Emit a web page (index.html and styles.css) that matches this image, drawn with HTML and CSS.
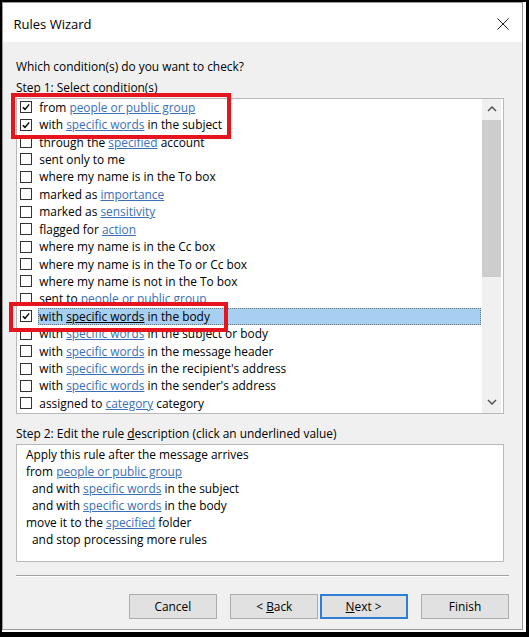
FILE: index.html
```html
<!DOCTYPE html>
<html lang="en">
  <head>
    <meta charset="UTF-8" />
    <meta name="viewport" content="width=device-width, initial-scale=1.0" />
    <title>Rules Wizard</title>
    <link rel="stylesheet" href="styles.css">
  </head>
  <body>
    <div class="frame">
      <div class="dialog">
        <div class="titlebar">
          <span class="title">Rules Wizard</span>
          <svg class="close" width="12" height="12" viewBox="0 0 12 12">
            <path d="M0.5 0.5 L11.5 11.5 M11.5 0.5 L0.5 11.5" stroke="#222" stroke-width="1" fill="none" />
          </svg>
        </div>

        <div class="content">
          <p class="prompt">Which condition(s) do you want to check?</p>
          <p class="step">Step 1: Select <u>c</u>ondition(s)</p>

          <div class="listbox">
            <ul class="conditions">
              <li class="row">
                <span class="check"><svg viewBox="0 0 12 12"><path d="M2.2 6.2 L4.8 8.8 L9.8 2.8" /></svg></span>
                <span class="label">from <a class="link" href="#">people or public group</a></span>
              </li>
              <li class="row">
                <span class="check"><svg viewBox="0 0 12 12"><path d="M2.2 6.2 L4.8 8.8 L9.8 2.8" /></svg></span>
                <span class="label">with <a class="link" href="#">specific words</a> in the subject</span>
              </li>
              <li class="row">
                <span class="check"></span>
                <span class="label">through the <a class="link" href="#">specified</a> account</span>
              </li>
              <li class="row">
                <span class="check"></span>
                <span class="label">sent only to me</span>
              </li>
              <li class="row">
                <span class="check"></span>
                <span class="label">where my name is in the To box</span>
              </li>
              <li class="row">
                <span class="check"></span>
                <span class="label">marked as <a class="link" href="#">importance</a></span>
              </li>
              <li class="row">
                <span class="check"></span>
                <span class="label">marked as <a class="link" href="#">sensitivity</a></span>
              </li>
              <li class="row">
                <span class="check"></span>
                <span class="label">flagged for <a class="link" href="#">action</a></span>
              </li>
              <li class="row">
                <span class="check"></span>
                <span class="label">where my name is in the Cc box</span>
              </li>
              <li class="row">
                <span class="check"></span>
                <span class="label">where my name is in the To or Cc box</span>
              </li>
              <li class="row">
                <span class="check"></span>
                <span class="label">where my name is not in the To box</span>
              </li>
              <li class="row">
                <span class="check"></span>
                <span class="label">sent to <a class="link" href="#">people or public group</a></span>
              </li>
              <li class="row selected">
                <span class="check"><svg viewBox="0 0 12 12"><path d="M2.2 6.2 L4.8 8.8 L9.8 2.8" /></svg></span>
                <span class="label">with <a class="link" href="#">specific words</a> in the body</span>
              </li>
              <li class="row">
                <span class="check"></span>
                <span class="label">with <a class="link" href="#">specific words</a> in the subject or body</span>
              </li>
              <li class="row">
                <span class="check"></span>
                <span class="label">with <a class="link" href="#">specific words</a> in the message header</span>
              </li>
              <li class="row">
                <span class="check"></span>
                <span class="label">with <a class="link" href="#">specific words</a> in the recipient's address</span>
              </li>
              <li class="row">
                <span class="check"></span>
                <span class="label">with <a class="link" href="#">specific words</a> in the sender's address</span>
              </li>
              <li class="row">
                <span class="check"></span>
                <span class="label">assigned to <a class="link" href="#">category</a> category</span>
              </li>
            </ul>

            <div class="scrollbar">
              <div class="arrow">
                <svg width="10" height="6" viewBox="0 0 10 6"><path d="M1 5 L5 1 L9 5" /></svg>
              </div>
              <div class="thumb"></div>
              <div class="track"></div>
              <div class="arrow">
                <svg width="10" height="6" viewBox="0 0 10 6"><path d="M1 1 L5 5 L9 1" /></svg>
              </div>
            </div>
          </div>

          <p class="step step-2">Step 2: Edit the rule <u>d</u>escription (click an underlined value)</p>

          <div class="description">
            <div>Apply this rule after the message arrives</div>
            <div>from <a class="link" href="#">people or public group</a></div>
            <div class="indent">and with <a class="link" href="#">specific words</a> in the subject</div>
            <div class="indent">and with <a class="link" href="#">specific words</a> in the body</div>
            <div>move it to the <a class="link" href="#">specified</a> folder</div>
            <div class="indent">and stop processing more rules</div>
          </div>

          <div class="separator"></div>

          <div class="button-row">
            <button type="button" class="btn btn-cancel">Cancel</button>
            <button type="button" class="btn btn-back">&lt; <u>B</u>ack</button>
            <button type="button" class="btn btn-next">
              <u>N</u>ext &gt;
            </button>
            <button type="button" class="btn">Finish</button>
          </div>
        </div>
      </div>

      <!-- highlight boxes drawn over the condition list -->
      <div class="marker marker-top"></div>
      <div class="marker marker-body"></div>
    </div>
  </body>
</html>
```

FILE: styles.css
```css
:root {
  --dialog-bg: #f0f0f0;
  --border-color: #b9b9b9;
  --link-color: #3c70b6;
  --marker-color: #e5141f;
  --select-bg: #a6cff2;
}

* {
  box-sizing: border-box;
  margin: 0;
  padding: 0;
}

html {
  background: #000;
}

body {
  padding: 2px 3px 5px 2px;
  font-family: "Open Sans", "Noto Sans", sans-serif;
  font-size: 11.9px;
  color: #000;
}

.frame {
  position: relative;
  width: 524px;
  height: 630px;
  background: #fff;
}

.dialog {
  width: 521px;
  height: 628px;
  border: 1px solid #9a9a9a;
  display: flex;
  flex-direction: column;
}

.titlebar {
  height: 39px;
  flex-shrink: 0;
  display: flex;
  align-items: center;
  justify-content: space-between;
  padding: 3px 13px 0 10.5px;
  background: #fff;
}

.title {
  font-size: 13px;
}

.content {
  flex: 1;
  background: var(--dialog-bg);
  padding: 15.5px 18px 0 13px;
}

.prompt,
.step {
  line-height: 17px;
}

.step {
  margin-top: 4px;
}

/* condition list */

.listbox {
  margin-top: 2px;
  height: 316px;
  border: 1px solid var(--border-color);
  background: #fff;
  display: flex;
}

.conditions {
  flex: 1;
  list-style: none;
  margin-right: 1px;
}

.row {
  height: 17.43px;
  display: flex;
  align-items: center;
}

.check {
  width: 12px;
  height: 12px;
  margin: 0 5.7px 0 3px;
  border: 1px solid #333;
  background: #fff;
  flex-shrink: 0;
}

.check svg {
  display: block;
  width: 10px;
  height: 10px;
}

.check path {
  fill: none;
  stroke: #000;
  stroke-width: 1.7;
}

.label {
  flex: 1;
  height: 17px;
  line-height: 15px;
  padding-left: 0.6px;
  border: 1px solid transparent;
  white-space: nowrap;
}

.link {
  color: var(--link-color);
  text-decoration: underline;
}

.selected .label {
  background: var(--select-bg);
  border: 1px dotted #5f7387;
}

.selected .link {
  color: #000;
}

.scrollbar {
  width: 19px;
  margin-right: 2px;
  background: var(--dialog-bg);
  display: flex;
  flex-direction: column;
}

.arrow {
  height: 21px;
  display: flex;
  align-items: center;
  justify-content: center;
}

.arrow path {
  fill: none;
  stroke: #555;
  stroke-width: 1.5;
}

.thumb {
  height: 157px;
  background: #cdcdcd;
}

.track {
  flex: 1;
}

/* rule description */

.step-2 {
  margin-top: 11px;
}

.description {
  margin-top: 2px;
  height: 118.5px;
  border: 1px solid var(--border-color);
  background: #fff;
  padding: 1.5px 9px;
  line-height: 16.9px;
}

.indent {
  padding-left: 6px;
}

.separator {
  margin: 12.5px -5px 0 0;
  border-top: 1px solid #a0a0a0;
  border-bottom: 1px solid #fff;
}

.button-row {
  display: flex;
  justify-content: flex-end;
  margin: 17px -5px 0 0;
}

.btn {
  width: 88px;
  height: 25px;
  background: #e1e1e1;
  border: 1px solid #adadad;
  font-family: inherit;
  font-size: 11.9px;
  color: #000;
}

.btn-cancel {
  margin-right: 13.5px;
}

.btn-back {
  margin-right: 1.3px;
}

.btn-next {
  margin-right: 13.4px;
  border: 2px solid #2c7fd4;
}

/* red call-out boxes */

.marker {
  position: absolute;
  border: 4px solid var(--marker-color);
}

.marker-top {
  left: 9px;
  top: 91px;
  width: 220px;
  height: 46px;
}

.marker-body {
  left: 7px;
  top: 300px;
  width: 219px;
  height: 30px;
}
```
